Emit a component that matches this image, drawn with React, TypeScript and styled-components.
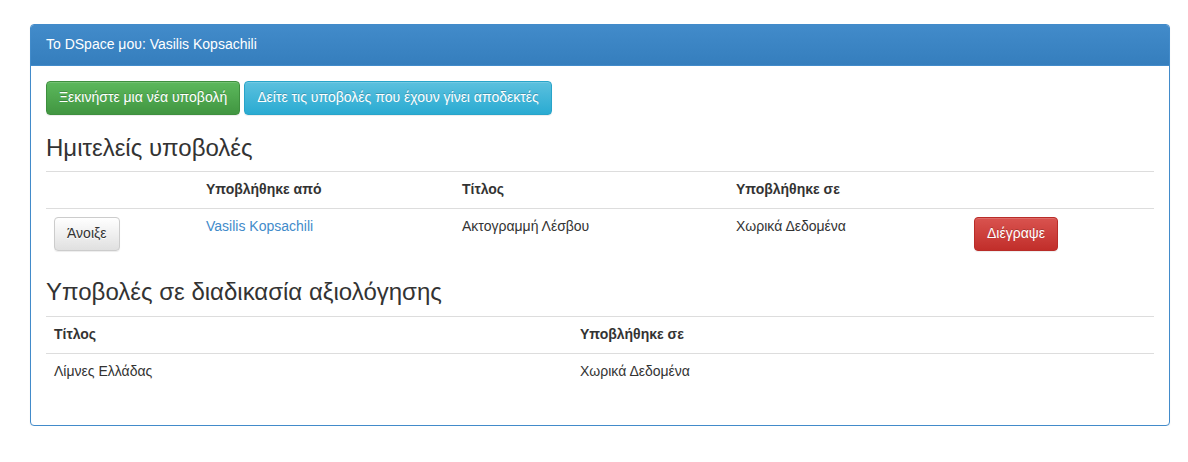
import React from "react";
import styled, { createGlobalStyle, css } from "styled-components";

const GlobalStyle = createGlobalStyle`
  body {
    margin: 0;
    background: #fff;
    font-family: "Liberation Sans", Arial, sans-serif;
    font-size: 14px;
    line-height: 1.42857;
    color: #333;
  }
`;

const Panel = styled.div`
  margin: 24px 0 0 30px;
  width: 1140px;
  box-sizing: border-box;
  border: 1px solid #428bca;
  border-radius: 4px;
  box-shadow: 0 1px 2px rgba(0, 0, 0, 0.05);
  background: #fff;
`;

const PanelHeading = styled.div`
  padding: 10px 15px;
  color: #fff;
  background: linear-gradient(to bottom, #428bca 0%, #357ebd 100%);
  border-bottom: 1px solid #428bca;
  border-radius: 3px 3px 0 0;
`;

const PanelBody = styled.div`
  padding: 15px;
`;

const Actions = styled.div`
  display: flex;
  gap: 4px;
`;

type Variant = "success" | "info" | "danger" | "default";

const variants: Record<Variant, ReturnType<typeof css>> = {
  success: css`
    color: #fff;
    background: linear-gradient(to bottom, #5cb85c 0%, #419641 100%);
    border-color: #3e8f3e;
  `,
  info: css`
    color: #fff;
    background: linear-gradient(to bottom, #5bc0de 0%, #2aabd2 100%);
    border-color: #28a4c9;
  `,
  danger: css`
    color: #fff;
    background: linear-gradient(to bottom, #d9534f 0%, #c12e2a 100%);
    border-color: #b92c28;
  `,
  default: css`
    color: #333;
    text-shadow: 0 1px 0 #fff;
    background: linear-gradient(to bottom, #fff 0%, #e0e0e0 100%);
    border-color: #ccc;
  `,
};

const Button = styled.button<{ $variant: Variant }>`
  display: inline-block;
  padding: 6px 12px;
  font-family: inherit;
  font-size: 14px;
  line-height: 1.42857;
  border: 1px solid transparent;
  border-radius: 4px;
  cursor: pointer;
  text-shadow: 0 -1px 0 rgba(0, 0, 0, 0.2);
  box-shadow: inset 0 1px 0 rgba(255, 255, 255, 0.15),
    0 1px 1px rgba(0, 0, 0, 0.075);
  ${(p) => variants[p.$variant]}
`;

const Heading = styled.h3`
  margin: 20px 0 10px;
  font-size: 24px;
  font-weight: 500;
  line-height: 1.1;
  color: #333;
`;

const Table = styled.table`
  width: 100%;
  border-collapse: collapse;
  border-spacing: 0;
  margin-bottom: 20px;
  table-layout: fixed;
`;

const Cell = styled.td<{ $w?: number }>`
  box-sizing: border-box;
  padding: 8px;
  border-top: 1px solid #ddd;
  vertical-align: top;
  text-align: left;
  ${(p) => (p.$w ? `width: ${p.$w}px;` : "")}
`;

const HeadCell = styled(Cell).attrs({ as: "th" })`
  font-weight: bold;
`;

const Link = styled.a`
  color: #428bca;
  text-decoration: none;
`;

export default function App() {
  return (
    <>
      <GlobalStyle />
      <Panel>
        <PanelHeading>To DSpace μου: Vasilis Kopsachili</PanelHeading>
        <PanelBody>
          <Actions>
            <Button $variant="success">Ξεκινήστε μια νέα υποβολή</Button>
            <Button $variant="info">Δείτε τις υποβολές που έχουν γίνει αποδεκτές</Button>
          </Actions>

          <Heading>Ημιτελείς υποβολές</Heading>
          <Table>
            <tbody>
              <tr>
                <HeadCell $w={152}></HeadCell>
                <HeadCell $w={256}>Υποβλήθηκε από</HeadCell>
                <HeadCell $w={274}>Τίτλος</HeadCell>
                <HeadCell $w={238}>Υποβλήθηκε σε</HeadCell>
                <HeadCell></HeadCell>
              </tr>
              <tr>
                <Cell>
                  <Button $variant="default">Άνοιξε</Button>
                </Cell>
                <Cell>
                  <Link href="#">Vasilis Kopsachili</Link>
                </Cell>
                <Cell>Ακτογραμμή Λέσβου</Cell>
                <Cell>Χωρικά Δεδομένα</Cell>
                <Cell>
                  <Button $variant="danger">Διέγραψε</Button>
                </Cell>
              </tr>
            </tbody>
          </Table>

          <Heading>Υποβολές σε διαδικασία αξιολόγησης</Heading>
          <Table>
            <tbody>
              <tr>
                <HeadCell $w={526}>Τίτλος</HeadCell>
                <HeadCell>Υποβλήθηκε σε</HeadCell>
              </tr>
              <tr>
                <Cell>Λίμνες Ελλάδας</Cell>
                <Cell>Χωρικά Δεδομένα</Cell>
              </tr>
            </tbody>
          </Table>
        </PanelBody>
      </Panel>
    </>
  );
}
